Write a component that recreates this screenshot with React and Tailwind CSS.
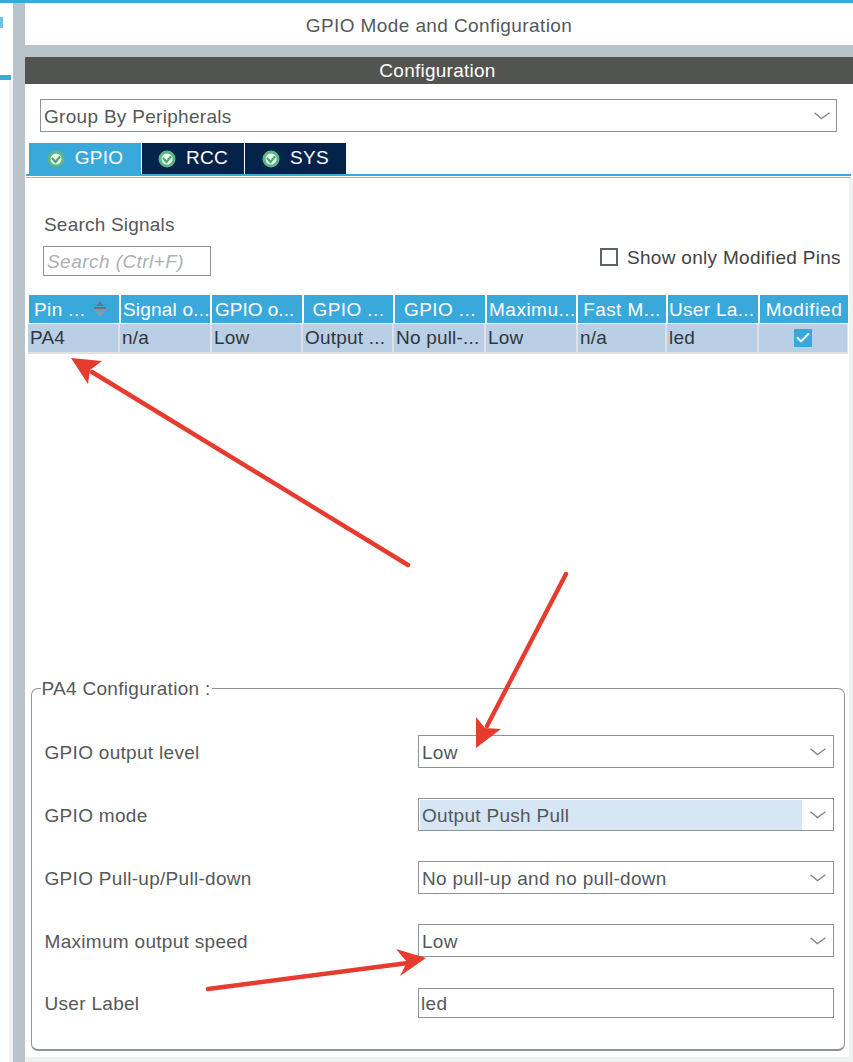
import React from 'react';
import { Check } from 'lucide-react';

const font = 'font-["Liberation_Sans",Arial,sans-serif]';

const headers = [
  { label: 'Pin ...', sort: true, cls: 'pl-[5px] tracking-[0.4px]' },
  { label: 'Signal o...', cls: 'pl-[2px] tracking-[0.2px]' },
  { label: 'GPIO o...', cls: 'pl-[3px] tracking-[0px]' },
  { label: 'GPIO ...', cls: 'justify-center tracking-[0.4px]' },
  { label: 'GPIO ...', cls: 'justify-center tracking-[0.4px]' },
  { label: 'Maximu...', cls: 'pl-[2px] tracking-[0.5px]' },
  { label: 'Fast M...', cls: 'justify-center tracking-[0.4px]' },
  { label: 'User La...', cls: 'pl-[1px] tracking-[0.3px]' },
  { label: 'Modified', cls: 'justify-center tracking-[0.6px]' },
];

const cells = ['PA4', 'n/a', 'Low', 'Output ...', 'No pull-...', 'Low', 'n/a', 'led'];

const tabs = [
  { label: 'GPIO', cls: 'w-[113px] bg-[#39a9dc] border-r border-white' },
  { label: 'RCC', cls: 'w-[103px] bg-[#03234b] border-r border-white' },
  { label: 'SYS', cls: 'w-[101px] bg-[#03234b]' },
];

const configRows = [
  { label: 'GPIO output level', value: 'Low' },
  { label: 'GPIO mode', value: 'Output Push Pull', active: true },
  { label: 'GPIO Pull-up/Pull-down', value: 'No pull-up and no pull-down' },
  { label: 'Maximum output speed', value: 'Low' },
];

const StatusIcon = () => (
  <svg width="18" height="18" viewBox="0 0 18 18" className="shrink-0">
    <circle cx="9" cy="9" r="8.5" fill="#5cb585" />
    <circle cx="9" cy="9" r="5.5" fill="#e9f5ee" />
    <path d="M5 8 L8.5 12 L13 6.5" fill="none" stroke="#49a873" strokeWidth="2.2" />
  </svg>
);

const Chevron = () => (
  <svg width="16" height="8" viewBox="0 0 16 8">
    <path d="M0.5 0.8 L7.5 6.6 L15.5 0.8" fill="none" stroke="#85888b" strokeWidth="1.4" />
  </svg>
);

const SelectBox = ({ value, active }) => (
  <div className="flex h-[33px] w-[416px] items-center border border-[#8f9499] bg-white">
    {active ? (
      <div className="ml-[1px] flex h-[30px] flex-1 items-center bg-[#d7e6f4] pl-[2px] pt-[3px]">{value}</div>
    ) : (
      <div className="flex h-full flex-1 items-center pl-[3px] pt-[3px]">{value}</div>
    )}
    <div className="flex w-[31px] justify-center pl-[1px]">
      <Chevron />
    </div>
  </div>
);

const Arrows = () => (
  <svg width="853" height="1062" className="pointer-events-none absolute left-0 top-0">
    <g stroke="#e63b2e" strokeWidth="4.4" strokeLinecap="round">
      <line x1="408" y1="565" x2="92" y2="372" />
      <line x1="566" y1="574" x2="487" y2="726" />
      <line x1="208" y1="989" x2="408" y2="963" />
    </g>
    <g fill="#e63b2e">
      <path d="M71 358 L102 361 L90 370 L88 384 Z" />
      <path d="M476 748 L476 717 L485 728 L501 729 Z" />
      <path d="M426 958 L396 949 L407 962 L400 976 Z" />
    </g>
  </svg>
);

export default function App() {
  return (
    <div className={`relative h-[1062px] w-[853px] overflow-hidden bg-white text-[19px] tracking-[0.3px] text-[#55585a] ${font}`}>
      <div className="h-[3px] bg-[#39a9dc]" />
      <div className="flex h-[1059px]">
        {/* left rail */}
        <div className="flex w-[13px] flex-col">
          <div className="mt-[14px] h-[11px] w-[3px] bg-[#6fc1e6]" />
          <div className="mt-[47px] h-[5px] w-[11px] bg-[#39a9dc]" />
          <div className="ml-[9px] flex-1 bg-[#f0f1f1]" />
        </div>
        <div className="w-[12px] bg-[#b8c3ca]" />

        {/* main */}
        <div className="flex w-[828px] flex-col">
          <div className="flex h-[42px] items-center justify-center pt-[5px] tracking-[0.4px]">GPIO Mode and Configuration</div>
          <div className="h-[12px] bg-[#b8c3ca]" />
          <div className="flex h-[27px] items-center justify-center bg-[#525452] pr-[3px] pt-[1px] tracking-[0.25px] text-white">Configuration</div>

          <div className="ml-[15px] mt-[15px] flex h-[33px] w-[797px] items-center border border-[#8f9499] pl-[3px] pt-[3px]">
            <span className="flex-1">Group By Peripherals</span>
            <div className="mr-[6px] mt-[-3px]">
              <Chevron />
            </div>
          </div>

          {/* tabs */}
          <div className="ml-[4px] mt-[11px] flex h-[31px] text-white">
            {tabs.map((t) => (
              <div key={t.label} className={`flex items-center justify-center gap-[10px] ${t.cls}`}>
                <StatusIcon />
                <span>{t.label}</span>
              </div>
            ))}
          </div>
          <div className="ml-[1px] mr-[2px] h-[2px] bg-[#39a9dc]" />
          <div className="ml-[1px] mr-[2px] mt-[1px] h-[1px] bg-[#7cc4e8]" />

          <div className="flex flex-1">
            <div className="w-[824px]">
              {/* search */}
              <div className="mt-[37px] h-[30px] pl-[19px] leading-none tracking-[0.2px]">Search Signals</div>
              <div className="mt-[1px] flex h-[49px] items-start">
                <div className="ml-[18px] flex h-[30px] w-[168px] items-center border border-[#8f9499] pl-[3px] pt-[2px] italic tracking-[0.45px] text-[#aeb0b2] whitespace-nowrap">
                  Search (Ctrl+F)
                </div>
                <div className="ml-[389px] mt-[2px] h-[18px] w-[18px] border-2 border-[#5f6264]" />
                <span className="ml-[9px] mt-[1px] leading-[21px] text-[#3f4244] whitespace-nowrap">Show only Modified Pins</span>
              </div>

              {/* signals table */}
              <div className="ml-[4px] grid grid-cols-[90px_89px_90px_89px_90px_89px_88px_90px_88px] gap-[2px] text-white">
                {headers.map((h, i) => (
                  <div key={i} className={`flex h-[28px] items-center bg-[#39a9dc] pt-[3px] whitespace-nowrap ${h.cls}`}>
                    <span>{h.label}</span>
                    {h.sort && (
                      <svg width="14" height="18" viewBox="0 0 14 18" className="ml-[8px] mt-[-3px]">
                        <path d="M7 1 L11 6 L3 6 Z M1 7 H13 V9 H1 Z" fill="#6d7478" />
                        <path d="M1 10 H13 V11 H1 Z M3 12 L11 12 L7 17 Z" fill="#7f9fb8" />
                      </svg>
                    )}
                  </div>
                ))}
              </div>
              <div className="ml-[3px] mt-[1px] grid w-[820px] grid-cols-[90px_90px_89px_89px_90px_90px_87px_90px_88px] gap-[2px] bg-[#dfe1e3] pb-[2px] tracking-[0.2px] text-[#333638]">
                {cells.map((c, i) => (
                  <div key={i} className="flex h-[28px] items-center bg-[#b8cfe6] pl-[2px] pt-[1px] whitespace-nowrap">{c}</div>
                ))}
                <div className="flex h-[28px] items-center justify-center bg-[#b8cfe6]">
                  <div className="flex h-[18px] w-[18px] items-center justify-center bg-[#39a9dc]">
                    <Check size={16} strokeWidth={3} className="text-white" />
                  </div>
                </div>
              </div>

              {/* pin configuration */}
              <fieldset className="ml-[6px] mt-[324px] h-[373px] w-[814px] rounded-[7px] border border-b-2 border-[#8f9499] pl-[12.5px] pr-[10px]">
                <legend className="ml-[-4px] px-[1px] leading-[21px]">PA4 Configuration :</legend>
                <div className="mt-[36px] flex flex-col gap-[30px]">
                  {configRows.map((r) => (
                    <div key={r.label} className="flex items-center justify-between">
                      <span className="pt-[3px]">{r.label}</span>
                      <SelectBox value={r.value} active={r.active} />
                    </div>
                  ))}
                  <div className="flex items-center justify-between">
                    <span className="pt-[3px]">User Label</span>
                    <div className="flex h-[30px] w-[416px] items-center border border-[#8f9499] pl-[2px] pt-[3px]">led</div>
                  </div>
                </div>
              </fieldset>
            </div>
            <div className="w-[4px] bg-[#f0f1f1]" />
          </div>
          <div className="h-[5px] bg-[#f0f1f1]" />
        </div>
      </div>
      <Arrows />
    </div>
  );
}
